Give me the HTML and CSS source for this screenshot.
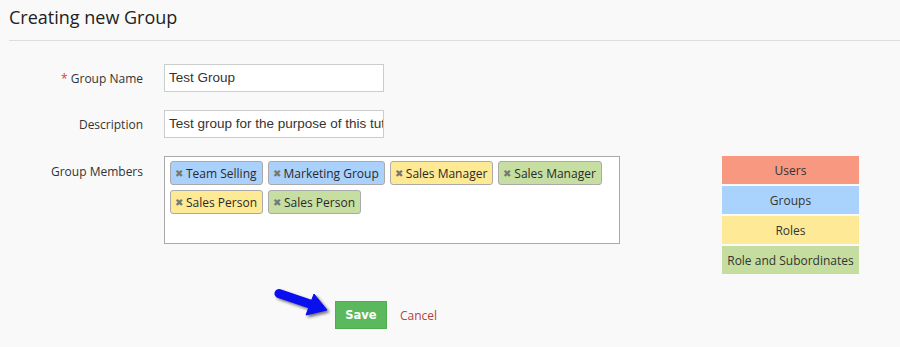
FILE: index.html
```html
<!DOCTYPE html>
<html lang="en">
<head>
    <meta charset="UTF-8">
    <title>Creating new Group</title>
    <link rel="stylesheet" href="styles.css">
</head>
<body>
    <div class="page-header">
        <h1>Creating new Group</h1>
    </div>

    <div class="form">
        <div class="form-row">
            <label class="form-label"><span class="required">*</span> Group Name</label>
            <div class="form-input">Test Group</div>
        </div>

        <div class="form-row">
            <label class="form-label">Description</label>
            <div class="form-input">Test group for the purpose of this tutorial</div>
        </div>

        <div class="form-row members-row">
            <label class="form-label">Group Members</label>
            <div class="members-box">
                <span class="tag tag-group"><i class="tag-x">&#10006;</i>Team Selling</span>
                <span class="tag tag-group"><i class="tag-x">&#10006;</i>Marketing Group</span>
                <span class="tag tag-role"><i class="tag-x">&#10006;</i>Sales Manager</span>
                <span class="tag tag-sub"><i class="tag-x">&#10006;</i>Sales Manager</span>
                <span class="tag tag-role"><i class="tag-x">&#10006;</i>Sales Person</span>
                <span class="tag tag-sub"><i class="tag-x">&#10006;</i>Sales Person</span>
            </div>
            <div class="legend">
                <div class="legend-item legend-users">Users</div>
                <div class="legend-item legend-groups">Groups</div>
                <div class="legend-item legend-roles">Roles</div>
                <div class="legend-item legend-sub">Role and Subordinates</div>
            </div>
        </div>

        <div class="actions">
            <!-- annotation arrow pointing at the save button -->
            <svg class="hint-arrow" width="64" height="40" viewBox="0 0 64 40">
                <g fill="#0a0ff0" stroke="#0a0ff0">
                    <line x1="9" y1="11.5" x2="40" y2="22" stroke-width="9" stroke-linecap="round"/>
                    <polygon points="44,12 57,28 36,33" stroke-width="1" stroke-linejoin="round"/>
                </g>
            </svg>
            <button class="btn-save">Save</button>
            <a class="btn-cancel" href="#">Cancel</a>
        </div>
    </div>
</body>
</html>
```

FILE: styles.css
```css
body {
    margin: 0;
    background: #f9f9f9;
    font-family: "Open Sans", Arial, sans-serif;
    font-size: 12px;
    color: #333;
}
.page-header {
    margin-left: 9px;
    padding-top: 5px;
    padding-bottom: 11px;
    border-bottom: 1px solid #ddd;
}
.page-header h1 {
    margin: 0;
    font-size: 18px;
    line-height: 24px;
    font-weight: normal;
    color: #222;
}
.form {
    padding-top: 23px;
}
.form-row {
    display: flex;
    align-items: center;
    margin-bottom: 18px;
}
.form-label {
    width: 143px;
    margin-right: 21px;
    text-align: right;
}
.required {
    color: #e03a2f;
}
.form-input {
    width: 209px;
    height: 26px;
    line-height: 26px;
    padding: 0 5px 0 4px;
    background: #fff;
    border: 1px solid #ccc;
    white-space: nowrap;
    overflow: hidden;
    font-family: "Liberation Sans", Arial, sans-serif;
    font-size: 13.5px;
    color: #333;
}
.members-row {
    align-items: flex-start;
}
.members-row .form-label {
    padding-top: 7px;
}
.members-box {
    width: 444px;
    height: 76px;
    padding: 4px 5px 6px 5px;
    background: #fff;
    border: 1px solid #aaa;
    display: flex;
    flex-wrap: wrap;
    align-content: flex-start;
    gap: 5px 5px;
}
.tag {
    display: inline-flex;
    align-items: center;
    height: 22px;
    padding: 0 5px 0 4px;
    border: 1px solid #aaa;
    border-radius: 3px;
    font-size: 12px;
    color: #2a2a2a;
    white-space: nowrap;
}
.tag-x {
    font-style: normal;
    font-size: 10px;
    color: #777;
    margin-right: 3px;
}
.tag-group {
    background: #a9d1fc;
}
.tag-role {
    background: #fee995;
}
.tag-sub {
    background: #c6dea1;
}
.legend {
    margin-left: 102px;
    width: 137px;
    display: flex;
    flex-direction: column;
    gap: 2px;
}
.legend-item {
    height: 28px;
    line-height: 29px;
    text-align: center;
    color: #333;
}
.legend-users {
    background: #f89880;
}
.legend-groups {
    background: #a9d3fd;
}
.legend-roles {
    background: #feea96;
}
.legend-sub {
    background: #c5dea0;
}
.actions {
    position: relative;
    display: flex;
    align-items: center;
    padding-left: 335px;
    padding-top: 9px;
}
.hint-arrow {
    position: absolute;
    left: 270px;
    top: -10px;
    filter: drop-shadow(2px 2px 1.5px rgba(0, 0, 0, 0.55));
}
.btn-save {
    width: 52px;
    height: 28px;
    padding: 0;
    background: #5cb85c;
    border: 1px solid #4cae4c;
    color: #fff;
    font-family: "DejaVu Sans", Verdana, sans-serif;
    font-weight: bold;
    font-size: 11.5px;
    cursor: pointer;
}
.btn-cancel {
    margin-left: 13px;
    color: #b5423f;
    text-decoration: none;
}
```
